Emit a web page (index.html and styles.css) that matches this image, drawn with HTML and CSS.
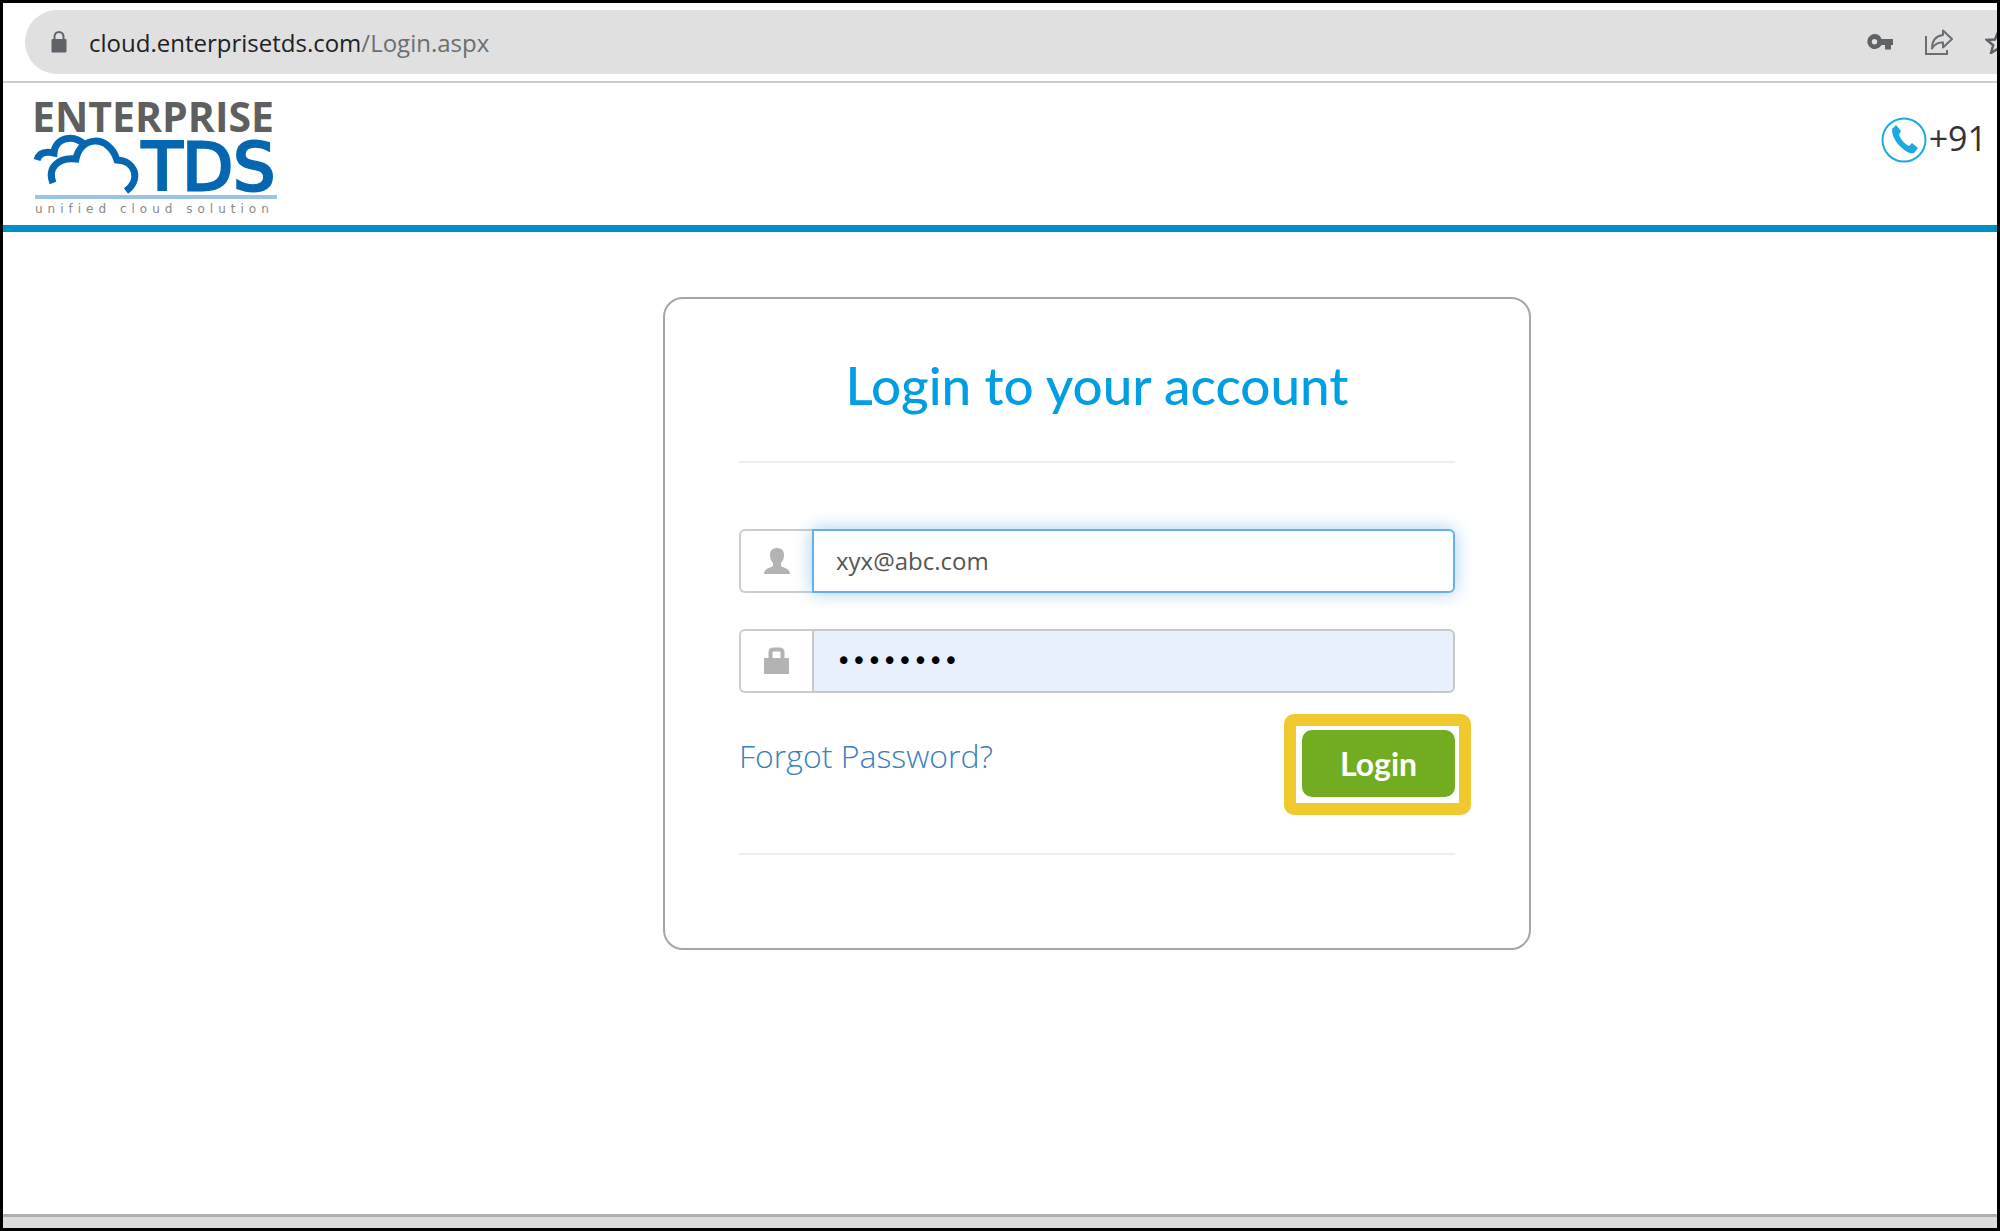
FILE: index.html
```html
<!DOCTYPE html>
<html lang="en">
<head>
    <meta charset="UTF-8">
    <meta name="viewport" content="width=device-width, initial-scale=1.0">
    <title>Enterprise TDS - Login</title>
    <link rel="stylesheet" href="styles.css">
</head>
<body>
    <div class="toolbar">
        <div class="address-bar">
            <svg class="icon-secure" viewBox="0 0 16 22" aria-hidden="true">
                <path d="M1.500 8h13a1 1 0 0 1 1 1v11.500a1 1 0 0 1-1 1h-13a1 1 0 0 1-1-1V9a1 1 0 0 1 1-1z" fill="#5f6368"/>
                <path d="M3.500 9V5.500a4.500 4.500 0 0 1 9 0V9" fill="none" stroke="#5f6368" stroke-width="2"/>
            </svg>
            <span class="url">cloud.enterprisetds.com<span class="url-path">/Login.aspx</span></span>
            <div class="toolbar-icons">
                <svg class="icon-key" viewBox="0 0 26 16" aria-hidden="true">
                    <path fill="#5f6368" fill-rule="evenodd" d="M7.500 0a7.500 7.500 0 0 1 7 5H26v6h-2v4.500h-6V11h-3.500A7.500 7.500 0 1 1 7.500 0zm0 5a2.700 2.700 0 1 0 0 5.400 2.700 2.700 0 0 0 0-5.400z"/>
                </svg>
                <svg class="icon-share" viewBox="0 0 28 26" aria-hidden="true">
                    <path d="M1 7v18h21v-4" fill="none" stroke="#6b6e72" stroke-width="2"/>
                    <path d="M18 1.500 27 10l-9 8.500v-5c-5-.5-8.500 1.500-11 6C7 12 11 7 18 6z" fill="none" stroke="#6b6e72" stroke-width="2" stroke-linejoin="round"/>
                </svg>
                <svg class="icon-star" viewBox="0 0 26 24" aria-hidden="true">
                    <path d="M13 2l3 7.500 8 .5-6.200 5.200L20 23l-7-4.500L6 23l2.200-7.800L2 10l8-.5z" fill="none" stroke="#5f6368" stroke-width="2.500"/>
                </svg>
            </div>
        </div>
    </div>

    <header class="header">
        <svg class="logo" viewBox="0 0 244 116" role="img" aria-label="Enterprise TDS">
            <text class="logo-name" x="-3" y="32">ENTERPRISE</text>
            <g fill="none" stroke="#0566b1" stroke-width="7">
                <path d="M2 60c2-7 8-9 17-7 1-15 19-20 31-8"/>
                <path d="M18 83c-6-15 5-26 23-24C45 36 74 34 82 60c19 1 24 20 9 31"/>
            </g>
            <text class="logo-tds" x="107" y="90">TDS</text>
            <rect y="95" width="242" height="4" fill="#9cc3e2"/>
            <text class="logo-tagline" x="0" y="113">unified cloud solution</text>
        </svg>
        <div class="phone">
            <svg class="icon-phone" viewBox="0 0 46 46" aria-hidden="true">
                <circle cx="23" cy="23" r="21.500" fill="none" stroke="#1aa9e1" stroke-width="2"/>
                <path d="M11 12l4-4 5 6-2 4c2 5 6 9 10 11l3-3 6 5-4 5c-4 1-8-1-12-5-6-5-10-12-10-19z" fill="#1aa9e1"/>
            </svg>
            <span>+91</span>
        </div>
    </header>

    <main class="main">
        <form class="login-card">
            <h1>Login to your account</h1>
            <hr>
            <div class="input-group">
                <label class="addon" for="username" aria-label="Username">
                    <svg class="icon-field" viewBox="0 0 28 28" aria-hidden="true">
                        <path d="M14 1c5 0 7 3 7 7 0 3-1 6-3 8v3c2 2 9 2 9 8H1c0-6 7-6 9-8v-3c-2-2-3-5-3-8 0-4 2-7 7-7z" fill="#b3b3b3"/>
                    </svg>
                </label>
                <input type="text" id="username" class="form-control focused" value="xyx@abc.com">
            </div>
            <div class="input-group">
                <label class="addon" for="password" aria-label="Password">
                    <svg class="icon-field" viewBox="0 0 28 28" aria-hidden="true">
                        <path d="M1 11h25v16H1z" fill="#b3b3b3"/>
                        <path d="M7.500 12V5.500q0-3 3-3h6q3 0 3 3V12" fill="none" stroke="#b3b3b3" stroke-width="4"/>
                    </svg>
                </label>
                <input type="password" id="password" class="form-control filled" value="password">
            </div>
            <div class="actions">
                <a href="#" class="forgot">Forgot Password?</a>
                <div class="highlight">
                    <button type="button" class="login-btn">Login</button>
                </div>
            </div>
            <hr>
        </form>
    </main>
    <footer class="status-bar"></footer>
</body>
</html>
```

FILE: styles.css
```css
* {
    box-sizing: border-box;
}

body {
    margin: 0;
    min-height: 100vh;
    display: flex;
    flex-direction: column;
    border: 3px solid #000;
    font-family: "Open Sans", sans-serif;
    background: #fff;
    color: #333;
    overflow-x: hidden;
}

.toolbar {
    padding: 7px 0 7px 22px;
    border-bottom: 2px solid #ccc;
}

.address-bar {
    display: flex;
    align-items: center;
    height: 64px;
    padding-left: 26px;
    background: #e0e0e0;
    border-radius: 32px 0 0 32px;
    overflow: hidden;
}

.icon-secure {
    width: 16px;
    height: 22px;
}

.url {
    margin-left: 22px;
    font-family: "Open Sans", sans-serif;
    font-size: 24px;
    color: #202124;
}

.url-path {
    color: #6b6e72;
}

.toolbar-icons {
    display: flex;
    align-items: center;
    gap: 32px;
    margin-left: auto;
    margin-right: -14px;
}

.icon-key {
    width: 26px;
    height: 16px;
}

.icon-share {
    width: 28px;
    height: 26px;
}

.icon-star {
    width: 26px;
    height: 24px;
}

.header {
    display: flex;
    justify-content: space-between;
    align-items: flex-start;
    height: 149px;
    padding: 17px 10px 0 32px;
    border-bottom: 7px solid #0090c8;
}

.logo {
    width: 244px;
    height: 116px;
    overflow: visible;
}

.logo-name {
    font-size: 41px;
    font-weight: 700;
    fill: #5f5f5f;
}

.logo-tds {
    font-family: "DejaVu Sans", sans-serif;
    font-size: 66px;
    fill: #0566b1;
    stroke: #0566b1;
    stroke-width: 3px;
}

.logo-tagline {
    font-family: "DejaVu Sans", sans-serif;
    font-size: 12px;
    letter-spacing: 5px;
    fill: #8a8a8a;
}

.phone {
    display: flex;
    align-items: flex-start;
    gap: 2px;
    margin-top: 17px;
    font-size: 34px;
    line-height: 42px;
}

.icon-phone {
    width: 46px;
    height: 46px;
}

.main {
    flex: 1;
    padding: 65px 0 0 33.1%;
}

.login-card {
    width: 868px;
    max-width: 100%;
    padding: 54px 74px 93px;
    border: 2px solid #a6a6a6;
    border-radius: 20px;
}

h1 {
    margin: 0;
    font-family: "Lato", sans-serif;
    font-size: 53px;
    font-weight: 500;
    line-height: 64px;
    color: #009fe3;
    text-align: center;
}

hr {
    margin: 44px 0 66px;
    border: 0;
    border-top: 2px solid #eee;
}

.input-group {
    display: flex;
    height: 64px;
    margin-bottom: 36px;
}

.addon {
    display: flex;
    align-items: center;
    justify-content: center;
    width: 73px;
    border: 2px solid #ccc;
    border-right: 0;
    border-radius: 6px 0 0 6px;
}

.icon-field {
    width: 28px;
    height: 28px;
}

.form-control {
    flex: 1;
    min-width: 0;
    padding: 0 22px 2px;
    border: 2px solid #ccc;
    border-radius: 0 6px 6px 0;
    font-family: "Open Sans", sans-serif;
    font-size: 24px;
    color: #555;
    background: #fff;
    outline: none;
}

.focused {
    border-color: #66afe9;
    box-shadow: 0 0 18px rgba(102, 175, 233, 0.6);
}

.filled {
    padding-bottom: 0;
    border-color: #c8c8c8;
    background: #e8f0fe;
    color: #000;
    font-family: "DejaVu Sans", sans-serif;
    font-size: 26px;
}

.actions {
    display: flex;
    justify-content: space-between;
    align-items: flex-start;
    padding-top: 1px;
}

.forgot {
    font-size: 32px;
    font-weight: 300;
    line-height: 52px;
    color: #3a80bd;
    text-decoration: none;
}

.highlight {
    position: relative;
}

/* frame around the login button */
.highlight::after {
    content: "";
    position: absolute;
    inset: -16px -16px -18px -18px;
    border: 12px solid #f0c92e;
    border-radius: 10px;
    pointer-events: none;
}

.login-btn {
    width: 153px;
    height: 67px;
    border: 0;
    border-radius: 10px;
    background: #72ac20;
    color: #fff;
    font-family: "Lato", sans-serif;
    font-size: 32px;
    font-weight: 700;
    cursor: pointer;
}

.actions + hr {
    margin: 56px 0 0;
}

.status-bar {
    height: 14px;
    border-top: 3px solid #b0b0b0;
    background: #dddde0;
}
```
